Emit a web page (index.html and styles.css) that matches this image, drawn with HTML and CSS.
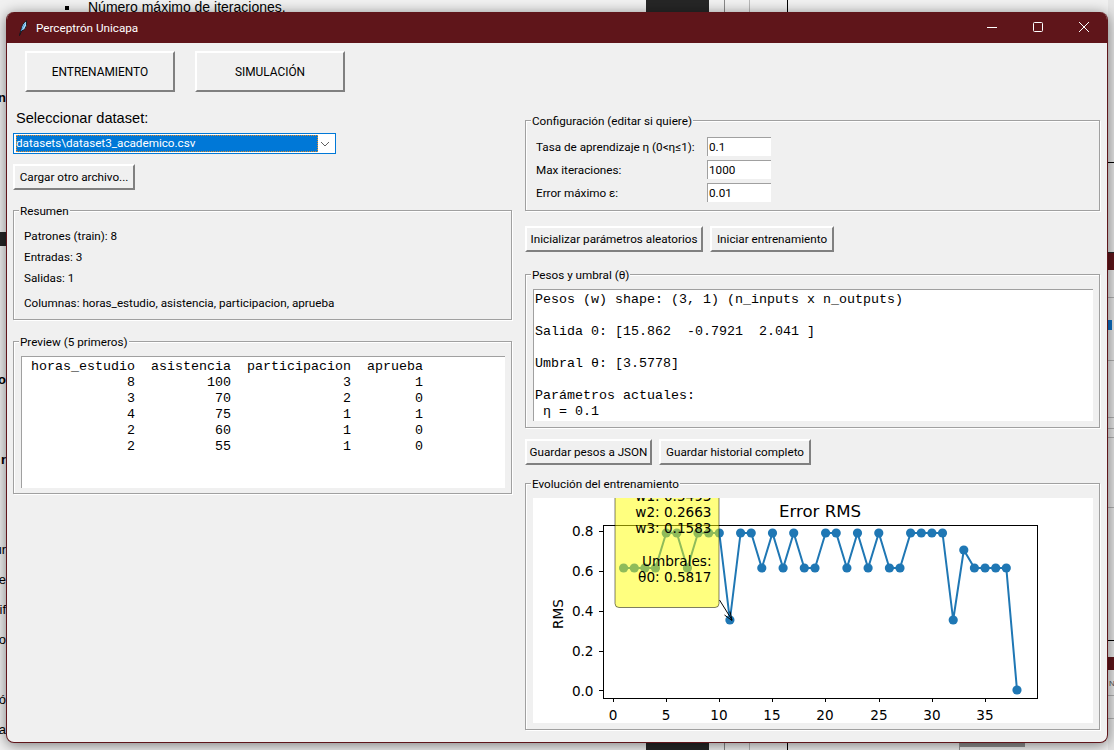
FILE: index.html
```html
<!DOCTYPE html>
<html lang="es">
<head>
	<meta charset="UTF-8">
	<title>Perceptrón Unicapa</title>
	<link rel="stylesheet" href="styles.css">
</head>
<body>
	<!-- Lo que se ve detras de la ventana -->
	<div id="desktop">
		<div class="behind-text">Número máximo de iteraciones.</div>
		<div class="behind-bullet"></div>
		<div class="behind-block"></div>
		<div class="behind-line line-c"></div>
		<div class="behind-line line-a"></div>
		<div class="behind-line line-b"></div>
		<div class="behind-line line-d"></div>
		<div class="behind-stub"></div>
		<div class="behind-bar bar-left"></div>
		<div class="right-strip"></div>
		<div class="behind-letter l1">n</div>
		<div class="behind-letter l2">o</div>
		<div class="behind-letter l3">r</div>
		<div class="behind-letter l4 thin">ur</div>
		<div class="behind-letter l5 thin">e</div>
		<div class="behind-letter l6 thin">if</div>
		<div class="behind-letter l7 thin">o</div>
		<div class="behind-letter l8 thin">ó</div>
		<div class="behind-letter l9 thin">a</div>
		<div class="behind-small">N</div>
	</div>

	<div id="window">
		<div id="titlebar">
			<svg class="feather" width="10" height="16" viewBox="0 0 10 16">
				<path d="M1.5 15.5 L3 10 Q3.5 4 8.5 0.8 Q9.5 6 6.5 9.5 L3.6 11 Z" fill="#a8d8fa" stroke="#10131a" stroke-width="0.9"/>
				<path d="M3 11 L7 3.5" stroke="#2f86d0" stroke-width="0.8"/>
			</svg>
			<span class="title">Perceptrón Unicapa</span>
			<div class="wincontrols">
				<svg width="46" height="31" viewBox="0 0 46 31"><path d="M18 15.5 H28" stroke="#fff" stroke-width="1"/></svg>
				<svg width="46" height="31" viewBox="0 0 46 31"><rect x="18.5" y="10.5" width="9" height="9" rx="1" fill="none" stroke="#fff"/></svg>
				<svg width="46" height="31" viewBox="0 0 46 31"><path d="M18 10 L28 20 M28 10 L18 20" stroke="#fff" stroke-width="1"/></svg>
			</div>
		</div>

		<div id="tabs">
			<button class="btn tab">ENTRENAMIENTO</button>
			<button class="btn tab">SIMULACIÓN</button>
		</div>

		<div id="main">
			<div id="leftCol">
				<div class="dataset-label">Seleccionar dataset:</div>
				<div class="combo">
					<span class="combo-value">datasets\dataset3_academico.csv</span>
					<svg class="combo-arrow" width="10" height="6" viewBox="0 0 10 6"><path d="M1 1 L5 5 L9 1" fill="none" stroke="#606060"/></svg>
				</div>
				<button class="btn load">Cargar otro archivo...</button>

				<div class="group resumen">
					<span class="group-title">Resumen</span>
					<p>Patrones (train): 8</p>
					<p>Entradas: 3</p>
					<p>Salidas: 1</p>
					<p class="cols">Columnas: horas_estudio, asistencia, participacion, aprueba</p>
				</div>

				<div class="group preview">
					<span class="group-title">Preview (5 primeros)</span>
<pre class="textbox preview-text"> horas_estudio  asistencia  participacion  aprueba
             8         100              3        1
             3          70              2        0
             4          75              1        1
             2          60              1        0
             2          55              1        0</pre>
				</div>
			</div>

			<div id="rightCol">
				<div class="group config">
					<span class="group-title">Configuración (editar si quiere)</span>
					<label for="rate">Tasa de aprendizaje η (0&lt;η≤1):</label><input id="rate" type="text" value="0.1">
					<label for="iters">Max iteraciones:</label><input id="iters" type="text" value="1000">
					<label for="maxErr">Error máximo ε:</label><input id="maxErr" type="text" value="0.01">
				</div>

				<div class="btnrow first">
					<button class="btn w-init">Inicializar parámetros aleatorios</button>
					<button class="btn w-train">Iniciar entrenamiento</button>
				</div>

				<div class="group pesos">
					<span class="group-title">Pesos y umbral (θ)</span>
<pre class="textbox pesos-text">Pesos (w) shape: (3, 1) (n_inputs x n_outputs)

Salida 0: [15.862  -0.7921  2.041 ]

Umbral θ: [3.5778]

Parámetros actuales:
 η = 0.1</pre>
				</div>

				<div class="btnrow second">
					<button class="btn w-json">Guardar pesos a JSON</button>
					<button class="btn w-hist">Guardar historial completo</button>
				</div>

				<div class="group evolucion">
					<span class="group-title">Evolución del entrenamiento</span>
					<svg class="chart" width="560" height="225" viewBox="533 498 560 225">
						<rect x="603.5" y="525.5" width="434" height="173" fill="none" stroke="#000"/>
						<text class="chart-title" x="820" y="517" text-anchor="middle">Error RMS</text>

						<!-- eje y -->
						<path d="M599 531.5H603M599 571.5H603M599 611.5H603M599 651.5H603M599 690.5H603" stroke="#000"/>
						<text x="593.5" y="536" text-anchor="end">0.8</text>
						<text x="593.5" y="576" text-anchor="end">0.6</text>
						<text x="593.5" y="616" text-anchor="end">0.4</text>
						<text x="593.5" y="656" text-anchor="end">0.2</text>
						<text x="593.5" y="695.5" text-anchor="end">0.0</text>
						<text x="563" y="614" text-anchor="middle" transform="rotate(-90 563 614)">RMS</text>

						<!-- eje x -->
						<path d="M613.5 698V702M666.5 698V702M719.5 698V702M772.5 698V702M825.5 698V702M879.5 698V702M932.5 698V702M985.5 698V702" stroke="#000"/>
						<text x="613" y="719.5" text-anchor="middle">0</text>
						<text x="666" y="719.5" text-anchor="middle">5</text>
						<text x="719" y="719.5" text-anchor="middle">10</text>
						<text x="772" y="719.5" text-anchor="middle">15</text>
						<text x="825" y="719.5" text-anchor="middle">20</text>
						<text x="879" y="719.5" text-anchor="middle">25</text>
						<text x="932" y="719.5" text-anchor="middle">30</text>
						<text x="985" y="719.5" text-anchor="middle">35</text>

						<!-- serie -->
						<polyline class="series" points="623.6,568 634.3,568 644.9,568 655.5,568 666.2,533 676.8,533 687.4,568 698,533 708.7,533 719.3,533 729.9,620 740.6,533 751.2,533 761.8,568 772.5,533 783.1,568 793.7,533 804.3,568 815,568 825.6,533 836.2,533 846.9,568 857.5,533 868.1,568 878.8,533 889.4,568 900,568 910.6,533 921.3,533 931.9,533 942.5,533 953.2,620 963.8,550 974.4,568 985.1,568 995.7,568 1006.3,568 1017,690"/>
						<g class="dots">
							<circle cx="623.6" cy="568" r="4.6"/><circle cx="634.3" cy="568" r="4.6"/><circle cx="644.9" cy="568" r="4.6"/><circle cx="655.5" cy="568" r="4.6"/><circle cx="666.2" cy="533" r="4.6"/><circle cx="676.8" cy="533" r="4.6"/><circle cx="687.4" cy="568" r="4.6"/><circle cx="698" cy="533" r="4.6"/><circle cx="708.7" cy="533" r="4.6"/><circle cx="719.3" cy="533" r="4.6"/>
							<circle cx="729.9" cy="620" r="4.6"/><circle cx="740.6" cy="533" r="4.6"/><circle cx="751.2" cy="533" r="4.6"/><circle cx="761.8" cy="568" r="4.6"/><circle cx="772.5" cy="533" r="4.6"/><circle cx="783.1" cy="568" r="4.6"/><circle cx="793.7" cy="533" r="4.6"/><circle cx="804.3" cy="568" r="4.6"/><circle cx="815" cy="568" r="4.6"/><circle cx="825.6" cy="533" r="4.6"/>
							<circle cx="836.2" cy="533" r="4.6"/><circle cx="846.9" cy="568" r="4.6"/><circle cx="857.5" cy="533" r="4.6"/><circle cx="868.1" cy="568" r="4.6"/><circle cx="878.8" cy="533" r="4.6"/><circle cx="889.4" cy="568" r="4.6"/><circle cx="900" cy="568" r="4.6"/><circle cx="910.6" cy="533" r="4.6"/><circle cx="921.3" cy="533" r="4.6"/><circle cx="931.9" cy="533" r="4.6"/>
							<circle cx="942.5" cy="533" r="4.6"/><circle cx="953.2" cy="620" r="4.6"/><circle cx="963.8" cy="550" r="4.6"/><circle cx="974.4" cy="568" r="4.6"/><circle cx="985.1" cy="568" r="4.6"/><circle cx="995.7" cy="568" r="4.6"/><circle cx="1006.3" cy="568" r="4.6"/><circle cx="1017" cy="690" r="4.6"/>
						</g>

						<!-- anotacion -->
						<rect class="note" x="615" y="480" width="104" height="127.5" rx="4"/>
						<path d="M719.5 600 L732 620" stroke="#000" fill="none"/>
						<path d="M732 620.5 L724.5 615 M732 620.5 L730 611.5" stroke="#000" fill="none"/>
						<text x="711.5" y="501" text-anchor="end">w1: 0.5493</text>
						<text x="711.5" y="517" text-anchor="end">w2: 0.2663</text>
						<text x="711.5" y="533" text-anchor="end">w3: 0.1583</text>
						<text x="711.5" y="566" text-anchor="end">Umbrales:</text>
						<text x="711.5" y="582" text-anchor="end">θ0: 0.5817</text>
					</svg>
				</div>
			</div>
		</div>
	</div>
</body>
</html>
```

FILE: styles.css
```css
* {
	box-sizing: border-box;
}
html, body {
	margin: 0;
	height: 100%;
	overflow: hidden;
}
body {
	background-color: #f1f1f1;
	font-family: Roboto, "Noto Sans", sans-serif;
	font-size: 11.7px;
	color: #000;
}

/* Fondo: otra ventana detras */
#desktop {
	position: absolute;
	inset: 0;
	overflow: hidden;
}
.behind-text {
	position: absolute;
	left: 88px;
	top: -1px;
	font-family: "Liberation Sans", sans-serif;
	font-size: 14px;
}
.behind-bullet {
	position: absolute;
	left: 65px;
	top: 6px;
	width: 4px;
	height: 4px;
	background-color: #000;
}
.behind-block {
	position: absolute;
	left: 646px;
	top: 0;
	width: 63px;
	height: 100%;
	background-color: #262626;
}
.behind-line {
	position: absolute;
	top: 0;
	bottom: 0;
	width: 1px;
}
.line-a {
	left: 749px;
	background-color: #b8b8b8;
}
.line-b {
	left: 787px;
	background-color: #000;
}
.line-c {
	left: 724px;
	background-color: #888;
}
.line-d {
	left: 959px;
	top: 743px;
	background-color: #999;
}
.behind-stub {
	position: absolute;
	left: 960px;
	top: 743px;
	width: 65px;
	height: 4px;
	background-color: #8f8f8f;
}
.behind-bar {
	position: absolute;
}
.bar-left {
	left: 0;
	top: 232px;
	width: 6px;
	height: 14px;
	background-color: #262626;
}
.right-strip {
	position: absolute;
	left: 1108px;
	top: 0;
	width: 6px;
	height: 100%;
	background:
		linear-gradient(#000, #000) 0 162px / 100% 1px no-repeat,
		linear-gradient(#262626, #262626) 0 252px / 100% 1px no-repeat,
		linear-gradient(#5f151a, #5f151a) 0 253px / 100% 17px no-repeat,
		linear-gradient(#b0b0b0, #b0b0b0) 0 297px / 100% 1px no-repeat,
		linear-gradient(#0b6fc4, #0b6fc4) 0 320px / 4px 10px no-repeat,
		linear-gradient(#b0b0b0, #b0b0b0) 0 360px / 100% 1px no-repeat,
		linear-gradient(#b0b0b0, #b0b0b0) 0 417px / 100% 1px no-repeat,
		linear-gradient(#b0b0b0, #b0b0b0) 0 428px / 100% 1px no-repeat,
		linear-gradient(#b0b0b0, #b0b0b0) 0 437px / 100% 1px no-repeat,
		linear-gradient(#b0b0b0, #b0b0b0) 0 507px / 100% 1px no-repeat,
		linear-gradient(#000, #000) 0 640px / 100% 1px no-repeat,
		linear-gradient(#5f151a, #5f151a) 0 657px / 100% 13px no-repeat,
		linear-gradient(#b0b0b0, #b0b0b0) 0 695px / 100% 1px no-repeat,
		linear-gradient(#b0b0b0, #b0b0b0) 0 718px / 100% 1px no-repeat,
		#e6e6e6;
}
.behind-small {
	position: absolute;
	left: 1109px;
	top: 679px;
	font-family: "Liberation Sans", sans-serif;
	font-size: 8px;
	color: #555;
}
.behind-letter {
	position: absolute;
	left: 0;
	width: 6px;
	overflow: hidden;
	font-family: "Liberation Sans", sans-serif;
	font-size: 13px;
	font-weight: bold;
	direction: rtl;
}
.behind-letter.thin {
	font-weight: normal;
}
.l1 { top: 90px; }
.l2 { top: 372px; }
.l3 { top: 452px; }
.l4 { top: 542px; }
.l5 { top: 572px; }
.l6 { top: 602px; }
.l7 { top: 632px; }
.l8 { top: 692px; }
.l9 { top: 722px; }

/* Ventana */
#window {
	position: absolute;
	left: 6px;
	top: 12px;
	width: 1102px;
	height: 731px;
	background-color: #f0f0f0;
	border: 1px solid #5f151a;
	border-top: 0;
	border-radius: 8px;
	overflow: hidden;
	box-shadow: 0 2px 14px rgba(0, 0, 0, 0.5);
}
#titlebar {
	display: flex;
	align-items: center;
	height: 31px;
	margin: 0 -1px;
	padding: 0 1px 0 12px;
	background-color: #5f151a;
	color: #fff;
}
.feather {
	margin-right: 8px;
}
.title {
	flex: 1;
}
.wincontrols {
	display: flex;
}
.wincontrols svg {
	display: block;
}

button {
	font: inherit;
	color: #000;
}
.btn {
	display: block;
	height: 26px;
	padding: 0 0 1px;
	background-color: #f0f0f0;
	border: 2px solid;
	border-color: #fff #808080 #808080 #fff;
	white-space: nowrap;
}
.w-init { width: 178px; }
.w-train { width: 124px; }
.w-json { width: 127px; }
.w-hist { width: 152px; }

#tabs {
	display: flex;
	gap: 20px;
	padding: 8px 0 0 18px;
}
.tab {
	width: 150px;
	height: 41px;
	padding: 0;
	font-size: 11.9px;
}

#main {
	display: flex;
	gap: 13px;
	padding-left: 6px;
}
#leftCol {
	width: 499px;
}
#rightCol {
	width: 575px;
	padding-top: 28px;
}

.dataset-label {
	margin: 16px 0 0 3px;
	height: 25px;
	font-family: "Liberation Sans", sans-serif;
	font-size: 14.6px;
	line-height: 20px;
}
.combo {
	display: flex;
	align-items: center;
	justify-content: space-between;
	width: 323px;
	height: 21px;
	padding: 1px 5px 1px 2px;
	background-color: #fff;
	border: 1px solid #0078d7;
}
.combo-value {
	width: 302px;
	height: 17px;
	line-height: 16px;
	background-color: #0078d7;
	color: #fff;
	outline: 1px dotted #e08a2a;
	outline-offset: -1px;
}
.load {
	margin-top: 10px;
	width: 122px;
}

/* Marcos con titulo */
.group {
	position: relative;
	border: 1px solid #a0a0a0;
	box-shadow: 1px 1px 0 #fff, inset 1px 1px 0 #fff;
}
.group-title {
	position: absolute;
	left: 5px;
	top: -8px;
	padding: 0 1px;
	line-height: 16px;
	background-color: #f0f0f0;
}
.resumen {
	height: 110px;
	margin-top: 20px;
	padding: 17px 0 0 10px;
}
.resumen p {
	margin: 0 0 5px;
	line-height: 16px;
}
.resumen .cols {
	margin-top: 9px;
}
.preview {
	height: 153px;
	margin-top: 21px;
	padding: 14px 6px 5px 7px;
}
.textbox {
	margin: 0;
	height: 100%;
	padding: 2px 0 0 1px;
	background-color: #fff;
	border-top: 1px solid #a0a0a0;
	border-left: 1px solid #a0a0a0;
	font-family: "Liberation Mono", monospace;
	font-size: 13.33px;
	line-height: 16px;
	overflow: hidden;
}

.config {
	display: grid;
	grid-template-columns: 171px 64px;
	grid-auto-rows: 19px;
	row-gap: 4px;
	align-items: center;
	height: 91px;
	padding: 16px 0 0 10px;
}
.config input {
	width: 64px;
	height: 19px;
	padding: 0 0 0 1px;
	background-color: #fff;
	border: 0;
	border-top: 1px solid #a0a0a0;
	border-left: 1px solid #a0a0a0;
	font: inherit;
	outline: none;
}

.btnrow {
	display: flex;
	gap: 7px;
}
.btnrow.first {
	margin-top: 15px;
}
.btnrow.second {
	margin-top: 11px;
}
.pesos {
	height: 154px;
	margin-top: 22px;
	padding: 14px 6px 6px 7px;
}
.evolucion {
	height: 247px;
	margin-top: 18px;
	padding: 14px 0 0 7px;
}

/* Grafico */
.chart {
	display: block;
	background-color: #fff;
	overflow: hidden;
}
.chart text {
	font-family: "DejaVu Sans", sans-serif;
	font-size: 13.6px;
}
.chart .chart-title {
	font-size: 16.6px;
}
.series {
	fill: none;
	stroke: #1f77b4;
	stroke-width: 2;
}
.dots circle {
	fill: #1f77b4;
}
.note {
	fill: #ffff00;
	fill-opacity: 0.5;
	stroke: #000;
	stroke-opacity: 0.5;
}
```
